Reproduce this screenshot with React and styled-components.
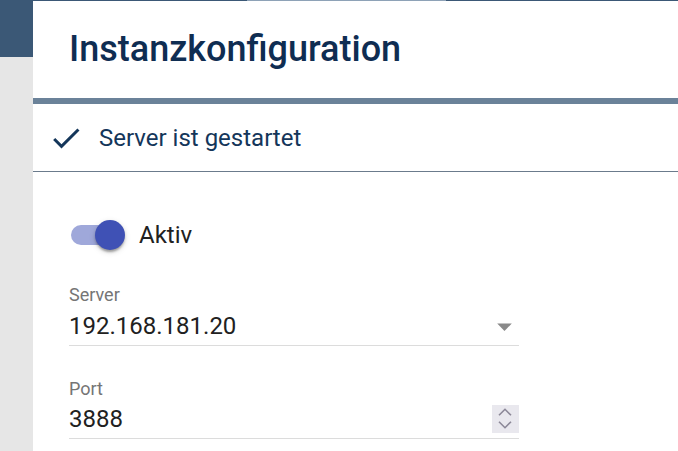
import React from 'react';
import styled, { createGlobalStyle } from 'styled-components';

// page reset...
const GlobalStyle = createGlobalStyle`
  html, body, #root {
    margin: 0;
    padding: 0;
    height: 100%;
  }
  body {
    font-family: Roboto, "Liberation Sans", sans-serif;
    background: #ffffff;
    overflow: hidden;
  }
`;

const Page = styled.div`
  display: flex;
  height: 100vh;
`;

const Sidebar = styled.div`
  width: 33px;
  display: flex;
  flex-direction: column;
  background-color: #e6e6e6;
`;

const SidebarHead = styled.div`
  height: 57px;
  background-color: #3b5876;
`;

const Main = styled.main`
  flex: 1;
  display: flex;
  flex-direction: column;
  background-color: #ffffff;
`;

const TopLine = styled.div`
  height: 1px;
  background: linear-gradient(
    to right,
    #3b5876 0,
    #3b5876 214px,
    #8ea2b7 214px,
    #8ea2b7 413px,
    #3b5876 413px
  );
`;

const Header = styled.header`
  padding: 27px 36px 28px;
  border-bottom: 6px solid #6b8299;
`;

const Title = styled.h1`
  margin: 0;
  font-size: 36px;
  line-height: 42px;
  font-weight: 500;
  color: #0f2d52;
`;

const StatusRow = styled.div`
  display: flex;
  align-items: center;
  gap: 15px;
  height: 67px;
  padding-left: 15px;
  border-bottom: 1px solid #6b7b8c;
`;

const StatusText = styled.span`
  font-size: 24px;
  color: #14365a;
`;

const Form = styled.div`
  padding: 48px 36px 0;
  display: flex;
  flex-direction: column;
`;

const ToggleRow = styled.label`
  display: flex;
  align-items: center;
  gap: 14px;
  margin-left: 2px;
  height: 30px;
`;

const Switch = styled.span`
  position: relative;
  display: inline-block;
  width: 54px;
  height: 30px;
`;

const Track = styled.span`
  display: block;
  margin-top: 5px;
  width: 50px;
  height: 20px;
  border-radius: 10px;
  background-color: ${({ $on }) => ($on ? '#9fa8da' : '#bdbdbd')};
`;

const Thumb = styled.span`
  position: absolute;
  top: 0;
  ${({ $on }) => ($on ? 'right: 0;' : 'left: 0;')}
  width: 30px;
  height: 30px;
  border-radius: 50%;
  background-color: ${({ $on }) => ($on ? '#3f51b5' : '#fafafa')};
  box-shadow: 0 3px 2px -1px rgba(0, 0, 0, 0.2), 0 2px 3px rgba(0, 0, 0, 0.16),
    0 2px 6px rgba(0, 0, 0, 0.14);
`;

const ToggleLabel = styled.span`
  font-size: 24px;
  color: #212121;
`;

const Field = styled.div`
  width: 450px;
  margin-top: ${({ $gap }) => $gap}px;
  display: flex;
  flex-direction: column;
  gap: ${({ $inner }) => $inner}px;
`;

const FieldLabel = styled.div`
  font-size: 18px;
  line-height: 20px;
  color: #757575;
`;

const ValueRow = styled.div`
  display: flex;
  align-items: center;
  justify-content: space-between;
  height: 28px;
  padding-bottom: 5px;
  border-bottom: 1px solid #dcdcdc;
`;

const Value = styled.span`
  font-size: 24px;
  line-height: 28px;
  color: #212121;
`;

const Spinner = styled.span`
  display: flex;
  width: 27px;
  height: 28px;
  background-color: #e9e8ee;
`;

const CheckIcon = () => (
  <svg width="36" height="36" viewBox="0 0 24 24" fill="#14365a">
    <path d="M9 16.17 4.83 12l-1.42 1.41L9 19 21 7l-1.41-1.41z" />
  </svg>
);

const ArrowDropDown = () => (
  <svg width="35" height="35" viewBox="0 0 24 24" fill="#8a8a8a" style={{ marginRight: '-3px' }}>
    <path d="M7 10l5 5 5-5z" />
  </svg>
);

export default function App() {
  return (
    <>
      <GlobalStyle />
      <Page>
        <Sidebar>
          <SidebarHead />
        </Sidebar>
        <Main>
          <TopLine />
          <Header>
            <Title>Instanzkonfiguration</Title>
          </Header>
          <StatusRow>
            <CheckIcon />
            <StatusText>Server ist gestartet</StatusText>
          </StatusRow>
          <Form>
            <ToggleRow>
              <Switch>
                <Track $on />
                <Thumb $on />
              </Switch>
              <ToggleLabel>Aktiv</ToggleLabel>
            </ToggleRow>
            <Field $gap={35} $inner={7}>
              <FieldLabel>Server</FieldLabel>
              <ValueRow>
                <Value>192.168.181.20</Value>
                <ArrowDropDown />
              </ValueRow>
            </Field>
            <Field $gap={33} $inner={6}>
              <FieldLabel>Port</FieldLabel>
              <ValueRow>
                <Value>3888</Value>
                <Spinner>
                  <svg width="27" height="28" viewBox="0 0 27 28" fill="none" stroke="#8c8898" strokeWidth="1.6">
                    <path d="M7 10.3 13 4.3l6 6" />
                    <path d="M7 16.7l6 6 6-6" />
                  </svg>
                </Spinner>
              </ValueRow>
            </Field>
          </Form>
        </Main>
      </Page>
    </>
  );
}
